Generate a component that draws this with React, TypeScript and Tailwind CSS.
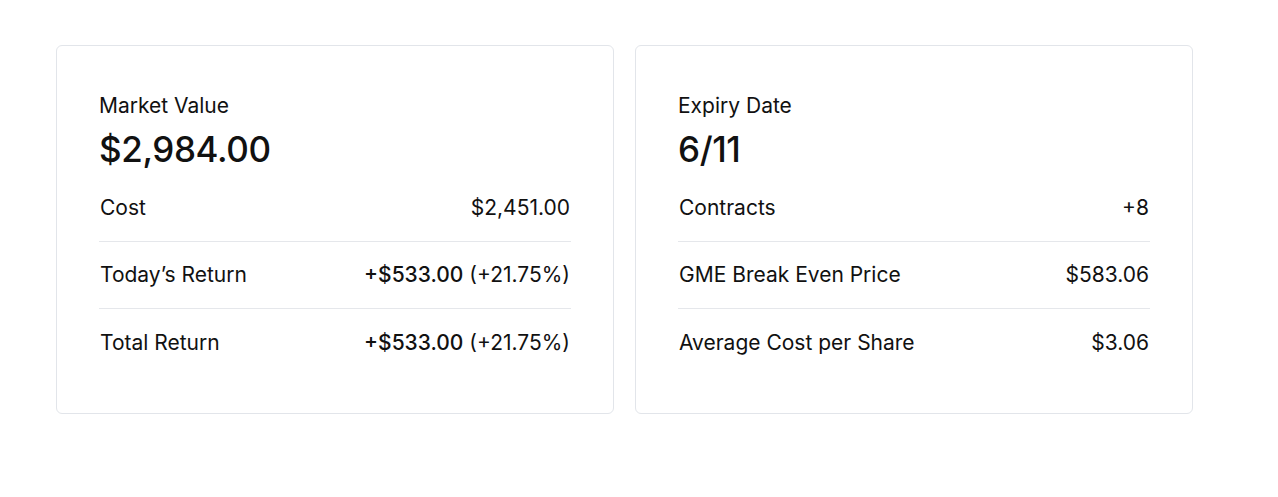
const cards = [
  {
    label: "Market Value",
    value: "$2,984.00",
    rows: [
      { name: "Cost", value: "$2,451.00" },
      { name: "Today’s Return", value: "+$533.00", extra: "(+21.75%)" },
      { name: "Total Return", value: "+$533.00", extra: "(+21.75%)" },
    ],
  },
  {
    label: "Expiry Date",
    value: "6/11",
    rows: [
      { name: "Contracts", value: "+8" },
      { name: "GME Break Even Price", value: "$583.06" },
      { name: "Average Cost per Share", value: "$3.06" },
    ],
  },
];

export default function App() {
  return (
    <div className="min-h-screen bg-white text-[#111] font-['Inter',sans-serif]">
      <div className="flex gap-[21px] pl-[56px] pt-[45px]">
        {cards.map((card) => (
          <div
            key={card.label}
            className="w-[558px] h-[369px] rounded-md border border-[#e2e5ea] px-[42px] pt-[46px]"
          >
            <div className="text-[21px] leading-[28px]">{card.label}</div>
            <div className="text-[35px] leading-[40px] font-medium mt-[9px] tracking-[-0.4px]">{card.value}</div>
            <div className="mt-[6px]">
              {card.rows.map((row, i) => (
                <div
                  key={row.name}
                  className={`flex items-center justify-between h-[67px] px-[1px] ${i < card.rows.length - 1 ? "border-b border-[#e5e7eb]" : ""}`}
                >
                  <span className="text-[21px] leading-[28px]">{row.name}</span>
                  <span className="text-[21px] leading-[28px]">
                    {row.extra ? <span className="font-medium">{row.value}</span> : row.value}
                    {row.extra && <span> {row.extra}</span>}
                  </span>
                </div>
              ))}
            </div>
          </div>
        ))}
      </div>
    </div>
  );
}
